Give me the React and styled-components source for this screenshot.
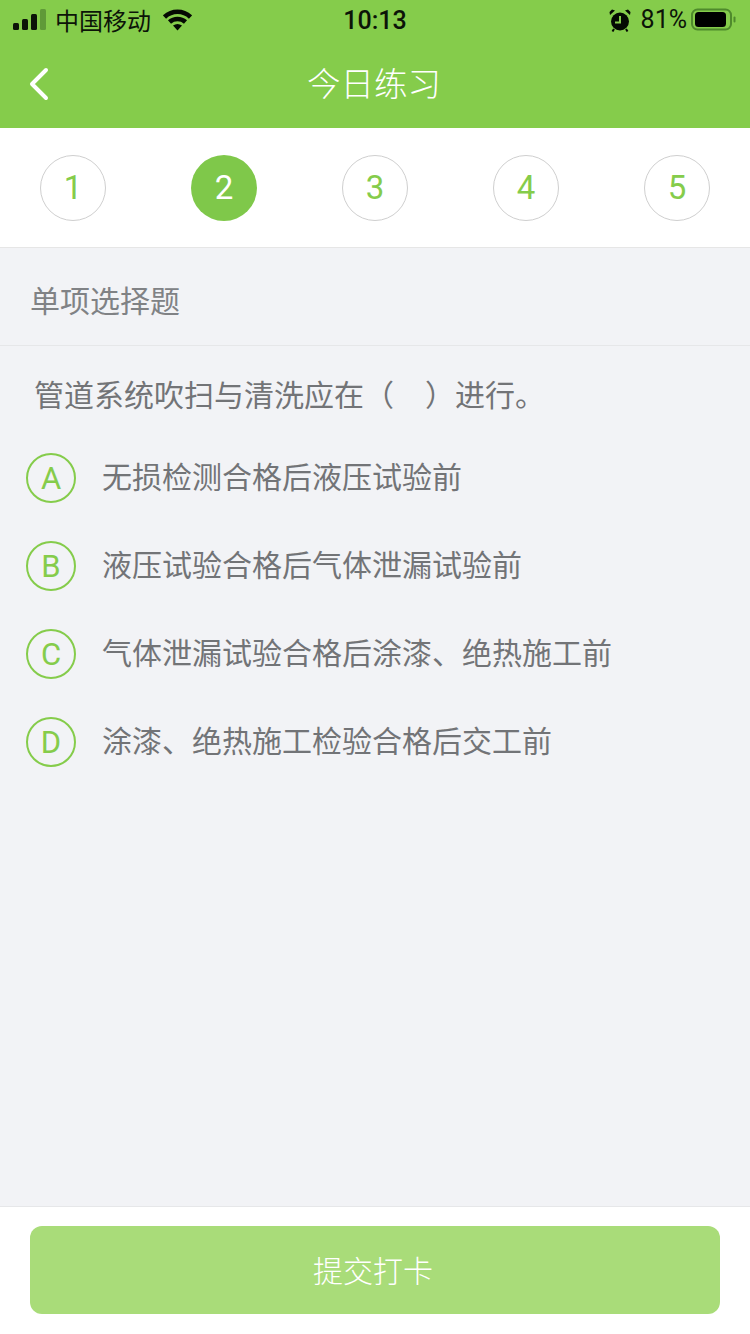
import React from 'react';
import styled, { createGlobalStyle } from 'styled-components';

const FONT = '"Noto Sans CJK SC", "Liberation Sans", sans-serif';
const DIGITS = 'Roboto, "Liberation Sans", "Noto Sans CJK SC", sans-serif';

const steps = [1, 2, 3, 4, 5];
const options = [
  { key: 'A', text: '无损检测合格后液压试验前' },
  { key: 'B', text: '液压试验合格后气体泄漏试验前' },
  { key: 'C', text: '气体泄漏试验合格后涂漆、绝热施工前' },
  { key: 'D', text: '涂漆、绝热施工检验合格后交工前' },
];

const GlobalStyle = createGlobalStyle`
  html, body {
    margin: 0;
    padding: 0;
  }
  body {
    font-family: ${FONT};
    background: #f2f3f6;
  }
`;

const Page = styled.div`
  width: 750px;
  height: 1334px;
  display: flex;
  flex-direction: column;
  background: #f2f3f6;
  overflow: hidden;
`;

const Header = styled.header`
  height: 128px;
  background: #85cc4b;
  display: flex;
  flex-direction: column;
  flex-shrink: 0;
`;

const StatusBar = styled.div`
  height: 40px;
  display: flex;
  align-items: center;
  justify-content: space-between;
  padding: 0 14px 0 13px;
  color: #0c1408;
  position: relative;
`;

const StatusGroup = styled.div`
  display: flex;
  align-items: center;
`;

const Carrier = styled.span`
  font-size: 24px;
  margin: 0 12px 0 8px;
  line-height: 40px;
`;

const Time = styled.span`
  position: absolute;
  top: 1px;
  left: 0;
  right: 0;
  text-align: center;
  font-family: ${DIGITS};
  font-size: 25px;
  font-weight: 500;
  line-height: 40px;
`;

const Percent = styled.span`
  font-family: ${DIGITS};
  font-size: 25px;
  margin: 0 4px 0 10px;
  line-height: 40px;
`;

const NavBar = styled.div`
  flex: 1;
  display: flex;
  align-items: center;
  justify-content: center;
  position: relative;
  padding-bottom: 6px;
`;

const BackButton = styled.svg`
  position: absolute;
  left: 28px;
  top: 27px;
`;

const Title = styled.h1`
  margin: 0 2px 0 0;
  font-size: 33.5px;
  font-weight: 300;
  color: #fff;
`;

const Steps = styled.nav`
  height: 119px;
  background: #fff;
  border-bottom: 1px solid #e6e6e6;
  padding: 0 40px;
  display: flex;
  align-items: center;
  justify-content: space-between;
  flex-shrink: 0;
`;

const Step = styled.div`
  width: 66px;
  height: 66px;
  box-sizing: border-box;
  border-radius: 50%;
  display: flex;
  align-items: center;
  justify-content: center;
  font-family: ${DIGITS};
  font-size: 33px;
  font-weight: 400;
  color: ${p => (p.$active ? '#fff' : '#85cc4b')};
  background: ${p => (p.$active ? '#7fc84a' : '#fff')};
  border: ${p => (p.$active ? 'none' : '1px solid #cfcfcf')};
`;

const Kind = styled.div`
  height: 98px;
  box-sizing: border-box;
  border-bottom: 1px solid #e6e7e9;
  padding: 4px 30px 0;
  display: flex;
  align-items: center;
  font-size: 30px;
  font-weight: 400;
  color: #808285;
`;

const Body = styled.main`
  flex: 1;
  padding: 24px 0 0 26px;
`;

const Question = styled.p`
  margin: 0 0 37px 8px;
  font-size: 30px;
  font-weight: 400;
  line-height: 46px;
  color: #727477;
  white-space: pre;
  word-spacing: 1px;
`;

const OptionList = styled.div`
  display: flex;
  flex-direction: column;
  gap: 38px;
`;

const Option = styled.div`
  display: flex;
  align-items: center;
  gap: 26px;
  height: 50px;
`;

const OptionKey = styled.span`
  width: 50px;
  height: 50px;
  box-sizing: border-box;
  border: 2px solid #85cc4b;
  border-radius: 50%;
  display: flex;
  align-items: center;
  justify-content: center;
  font-family: ${DIGITS};
  font-size: 31px;
  font-weight: 400;
  color: #85cc4b;
`;

const OptionText = styled.span`
  font-size: 30px;
  font-weight: 400;
  color: #727477;
  position: relative;
  top: -3px;
`;

const Footer = styled.footer`
  height: 128px;
  box-sizing: border-box;
  background: #fff;
  border-top: 1px solid #e6e7e9;
  padding: 19px 30px 0;
  flex-shrink: 0;
`;

const Submit = styled.button`
  width: 100%;
  height: 88px;
  border: none;
  border-radius: 12px;
  background: #a9dc79;
  color: #fff;
  font-family: ${FONT};
  font-size: 30px;
  font-weight: 300;
  padding: 0 4px 3px 0;
`;

const Signal = () => (
  <svg width="34" height="22" viewBox="0 0 34 22">
    <rect x="0" y="14" width="6" height="7" rx="1.5" fill="#0c1408" />
    <rect x="9" y="10" width="6" height="11" rx="1.5" fill="#0c1408" />
    <rect x="18" y="5" width="6" height="16" rx="1.5" fill="#0c1408" />
    <rect x="27" y="0" width="6" height="21" rx="1.5" fill="#5f9a38" />
  </svg>
);

const Wifi = () => (
  <svg width="29" height="22" viewBox="0 0 29 22">
    <path d="M1.5 8 C9 1 20 1 27.5 8" fill="none" stroke="#050a03" strokeWidth="4.6" />
    <path d="M6.5 13 C11 9 18 9 22.5 13" fill="none" stroke="#050a03" strokeWidth="4.6" />
    <path d="M10 16.5 C13 14.5 16 14.5 19 16.5 L14.5 21.5 Z" fill="#050a03" />
  </svg>
);

const Alarm = () => (
  <svg width="22" height="23" viewBox="0 0 22 23">
    <circle cx="11" cy="12.5" r="9" fill="#050a03" />
    <path d="M11 7 V13.5 H6" fill="none" stroke="#85cc4b" strokeWidth="2" />
    <path d="M1 6 L6 1.5 L3 0.5 L0.5 3 Z M21 6 L16 1.5 L19 0.5 L21.5 3 Z" fill="#050a03" />
    <path d="M5 20 L3.5 22.5 M17 20 L18.5 22.5" stroke="#050a03" strokeWidth="2" />
  </svg>
);

const Battery = () => (
  <svg width="45" height="24" viewBox="0 0 45 24">
    <rect x="1" y="1.5" width="39" height="20" rx="5.5" fill="none" stroke="#4f8a2c" strokeWidth="2" />
    <rect x="4" y="4" width="31" height="15" rx="3.5" fill="#000" />
    <rect x="42.5" y="8.5" width="2" height="6" rx="1" fill="#4f8a2c" />
  </svg>
);

export default function App() {
  return (
    <Page>
      <GlobalStyle />
      <Header>
        <StatusBar>
          <StatusGroup>
            <Signal />
            <Carrier>中国移动</Carrier>
            <Wifi />
          </StatusGroup>
          <Time>10:13</Time>
          <StatusGroup>
            <Alarm />
            <Percent>81%</Percent>
            <Battery />
          </StatusGroup>
        </StatusBar>
        <NavBar>
          <BackButton width="22" height="34" viewBox="0 0 22 34">
            <path d="M18 3 L4 17 L18 31" fill="none" stroke="#fff" strokeWidth="4" strokeLinecap="round" strokeLinejoin="round" />
          </BackButton>
          <Title>今日练习</Title>
        </NavBar>
      </Header>
      <Steps>
        {steps.map(n => (
          <Step key={n} $active={n === 2}>{n}</Step>
        ))}
      </Steps>
      <Kind>单项选择题</Kind>
      <Body>
        <Question>管道系统吹扫与清洗应在（    ）进行。</Question>
        <OptionList>
          {options.map(o => (
            <Option key={o.key}>
              <OptionKey>{o.key}</OptionKey>
              <OptionText>{o.text}</OptionText>
            </Option>
          ))}
        </OptionList>
      </Body>
      <Footer>
        <Submit>提交打卡</Submit>
      </Footer>
    </Page>
  );
}
